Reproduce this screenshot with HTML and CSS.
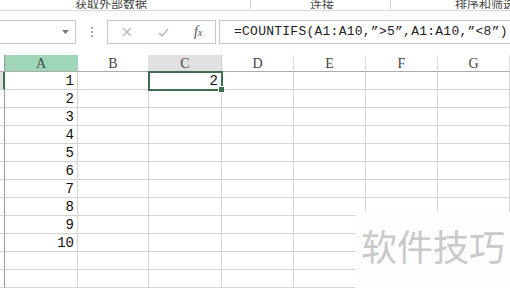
FILE: index.html
```html
<!DOCTYPE html>
<html>
<head>
<meta charset="utf-8">
<link rel="stylesheet" href="styles.css">
</head>
<body>
<div class="page">
  <div class="ribbon">
    <div class="rgroup g1"><span class="rlabel">获取外部数据</span></div>
    <div class="rgroup g2"><span class="rlabel">连接</span></div>
    <div class="rgroup g3"><span class="rlabel">排序和筛选</span></div>
  </div>
  <div class="fbar">
    <div class="namebox">
      <svg class="dd" width="7" height="4" viewBox="0 0 7 4"><path d="M0 0H7L3.5 4Z" fill="#777"/></svg>
    </div>
    <div class="dots"><span></span><span></span><span></span></div>
    <div class="fxbox">
      <svg class="ico" width="10" height="10" viewBox="0 0 10 10"><path d="M1 1L9 9M9 1L1 9" stroke="#b4b4b4" stroke-width="1.3" fill="none"/></svg>
      <svg class="ico" width="11" height="9" viewBox="0 0 11 9"><path d="M1 5L4 8L10 1" stroke="#b4b4b4" stroke-width="1.3" fill="none"/></svg>
      <span class="fx"><i>f</i><i class="x">x</i></span>
    </div>
    <div class="formula">=COUNTIFS(A1:A10,”&gt;5”,A1:A10,”&lt;8”)</div>
  </div>
  <div class="grid">
    <div class="rh hdr"></div>
    <div class="ch sel-a">A</div>
    <div class="ch">B</div>
    <div class="ch sel-c">C</div>
    <div class="ch">D</div>
    <div class="ch">E</div>
    <div class="ch">F</div>
    <div class="ch last">G</div>

    <div class="rh act"></div><div class="c n">1</div><div class="c"></div><div class="c n cur">2<span class="handle"></span></div><div class="c"></div><div class="c"></div><div class="c"></div><div class="c last"></div>
    <div class="rh"></div><div class="c n">2</div><div class="c"></div><div class="c"></div><div class="c"></div><div class="c"></div><div class="c"></div><div class="c last"></div>
    <div class="rh"></div><div class="c n">3</div><div class="c"></div><div class="c"></div><div class="c"></div><div class="c"></div><div class="c"></div><div class="c last"></div>
    <div class="rh"></div><div class="c n">4</div><div class="c"></div><div class="c"></div><div class="c"></div><div class="c"></div><div class="c"></div><div class="c last"></div>
    <div class="rh"></div><div class="c n">5</div><div class="c"></div><div class="c"></div><div class="c"></div><div class="c"></div><div class="c"></div><div class="c last"></div>
    <div class="rh"></div><div class="c n">6</div><div class="c"></div><div class="c"></div><div class="c"></div><div class="c"></div><div class="c"></div><div class="c last"></div>
    <div class="rh"></div><div class="c n">7</div><div class="c"></div><div class="c"></div><div class="c"></div><div class="c"></div><div class="c"></div><div class="c last"></div>
    <div class="rh"></div><div class="c n">8</div><div class="c"></div><div class="c"></div><div class="c"></div><div class="c"></div><div class="c"></div><div class="c last"></div>
    <div class="rh"></div><div class="c n">9</div><div class="c"></div><div class="c"></div><div class="c"></div><div class="c"></div><div class="c"></div><div class="c last"></div>
    <div class="rh"></div><div class="c n">10</div><div class="c"></div><div class="c"></div><div class="c"></div><div class="c"></div><div class="c"></div><div class="c last"></div>
    <div class="rh"></div><div class="c"></div><div class="c"></div><div class="c"></div><div class="c"></div><div class="c"></div><div class="c"></div><div class="c last"></div>
    <div class="rh"></div><div class="c"></div><div class="c"></div><div class="c"></div><div class="c"></div><div class="c"></div><div class="c"></div><div class="c last"></div>
  </div>
  <div class="watermark">软件技巧</div>
</div>
</body>
</html>
```

FILE: styles.css
```css
html, body {
  margin: 0;
  padding: 0;
  background: #fff;
}
.page {
  position: relative;
  width: 510px;
  height: 288px;
  overflow: hidden;
  font-family: "Liberation Sans", "Noto Sans CJK SC", sans-serif;
  color: #333;
}
.ribbon {
  display: flex;
  height: 10px;
  border-bottom: 1px solid #d8d8d8;
  overflow: hidden;
}
.rgroup {
  display: flex;
  justify-content: center;
  align-items: flex-end;
  height: 9px;
  overflow: hidden;
}
.g1 { width: 250px; border-right: 1px solid #d0d0d0; }
.g2 { width: 139px; border-right: 1px solid #d0d0d0; }
.g3 { flex: 1; justify-content: flex-start; padding-left: 64px; }
.rlabel {
  font-family: "Noto Sans CJK SC", sans-serif;
  font-size: 12px;
  line-height: 12px;
  color: #444;
  margin-bottom: -1px;
  white-space: nowrap;
}
.g1 .rlabel { margin-left: -28px; }
.g2 .rlabel { margin-left: 3px; }

.fbar {
  display: flex;
  align-items: stretch;
  height: 24px;
  margin-top: 9px;
}
.namebox {
  width: 78px;
  margin-left: -2px;
  box-sizing: border-box;
  border: 1px solid #c6c6c6;
  background: #fff;
  display: flex;
  align-items: center;
  justify-content: flex-end;
  padding-right: 6px;
}
.dots {
  width: 31px;
  display: flex;
  flex-direction: column;
  align-items: center;
  justify-content: center;
  gap: 2px;
}
.dots span {
  width: 2px;
  height: 2px;
  background: #a8a8a8;
}
.fxbox {
  width: 109px;
  box-sizing: border-box;
  border: 1px solid #c6c6c6;
  display: flex;
  align-items: center;
  padding-left: 14px;
}
.fxbox .ico:first-child { margin-right: 26px; }
.fxbox .ico:nth-child(2) { margin-right: 25px; }
.fx {
  font-family: "Liberation Serif", serif;
  font-size: 14px;
  color: #555;
  line-height: 14px;
}
.fx .x { font-size: 10px; }
.formula {
  flex: 1;
  margin-left: 3px;
  box-sizing: border-box;
  border: 1px solid #c6c6c6;
  border-right: none;
  padding-left: 14px;
  font-family: "Liberation Mono", monospace;
  font-size: 13px;
  letter-spacing: 0.25px;
  line-height: 22px;
  color: #222;
  white-space: nowrap;
  overflow: hidden;
}

.grid {
  display: grid;
  grid-template-columns: 5px 73px 71px 73px 72px 72px 72px 72px;
  grid-template-rows: 17px repeat(12, 18px);
  margin-top: 11px;
}
.grid > div {
  box-sizing: border-box;
}
.rh {
  border-right: 1px solid #9c9c9c;
  border-bottom: 1px solid #d4d4d4;
  background: #fff;
}
.rh.hdr {
  border-bottom: 1px solid #ababab;
}
.rh.act {
  background: #e1e1e1;
  border-right: 2px solid #3d6e50;
}
.ch {
  border-right: 1px solid #e0e0e0;
  border-bottom: 1px solid #ababab;
  font-family: "Liberation Serif", serif;
  font-size: 14px;
  line-height: 17px;
  text-align: center;
  color: #444;
}
.ch.sel-a { background: #9fd6b8; border-right-color: #9fd6b8; }
.ch.sel-c { background: #e1e1e1; border-right-color: #cfcfcf; }
.c {
  border-right: 1px solid #d4d4d4;
  border-bottom: 1px solid #d4d4d4;
}
.n {
  font-family: "Liberation Mono", monospace;
  font-size: 14px;
  line-height: 18px;
  text-align: right;
  padding-right: 3px;
  color: #111;
}
.cur {
  position: relative;
  outline: 2px solid #3d6e50;
  outline-offset: -1px;
  z-index: 2;
}
.handle {
  position: absolute;
  right: -4px;
  bottom: -4px;
  width: 5px;
  height: 5px;
  background: #3d6e50;
  border: 1px solid #fff;
}
.watermark {
  position: absolute;
  left: 355px;
  top: 212px;
  width: 155px;
  height: 76px;
  background: #fdfdfd;
  font-family: "Noto Sans CJK SC", sans-serif;
  font-size: 36px;
  line-height: 36px;
  color: #c9c9c9;
  padding: 15px 0 0 6px;
  box-sizing: border-box;
  white-space: nowrap;
}
```
